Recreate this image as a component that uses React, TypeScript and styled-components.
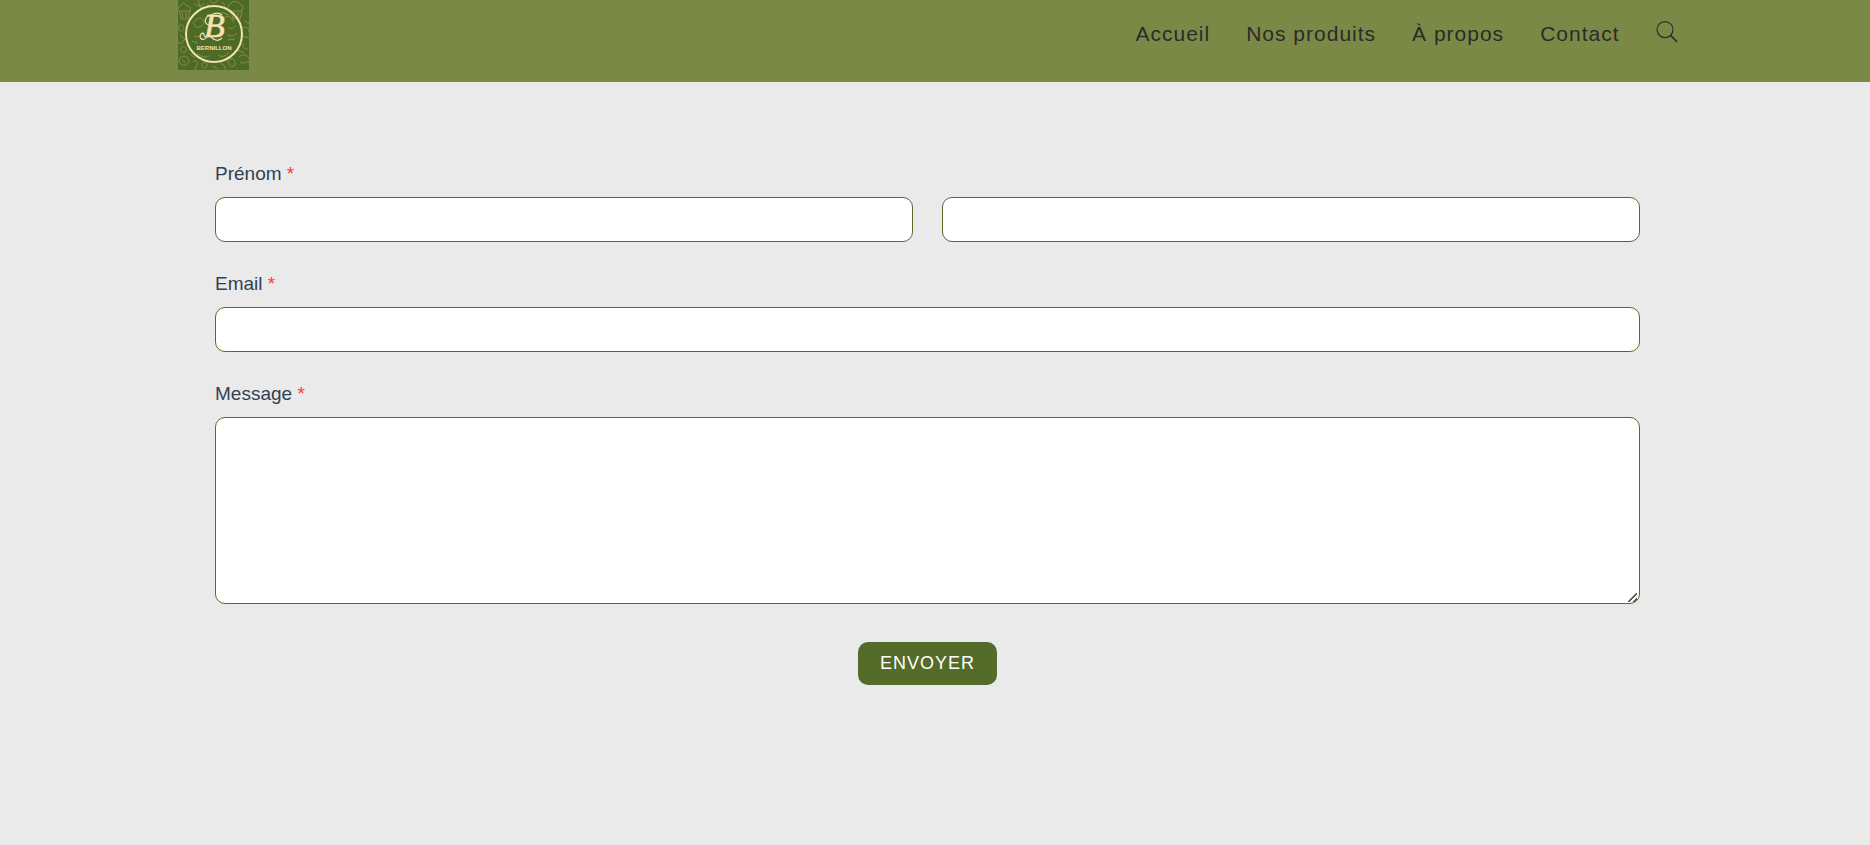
import React from "react";
import styled, { createGlobalStyle } from "styled-components";

const GlobalStyle = createGlobalStyle`
  *, *::before, *::after { box-sizing: border-box; }
  body {
    margin: 0;
    background: #eaeaea;
    font-family: "Liberation Sans", Arial, Helvetica, sans-serif;
  }
`;

const Header = styled.header`
  background: #7b8946;
  padding: 0 15px 12px 0;
`;

const HeaderInner = styled.div`
  display: flex;
  justify-content: space-between;
  align-items: flex-start;
  max-width: 1500px;
  margin: 0 auto;
`;

const LogoLink = styled.a`
  display: block;
  svg { display: block; }
`;

const Nav = styled.nav`
  display: flex;
  align-items: flex-start;
  gap: 36px;
  padding-top: 19px;
`;

const NavLink = styled.a`
  font-size: 21px;
  line-height: 30px;
  letter-spacing: 1px;
  color: #2b2b2b;
  text-decoration: none;
`;

const SearchButton = styled.button`
  border: 0;
  background: none;
  padding: 2px 0 0;
  color: #2b2b2b;
  cursor: pointer;
  svg { display: block; }
`;

const Main = styled.main`
  padding: 80px 15px 160px 0;
`;

const Form = styled.form`
  display: flex;
  flex-direction: column;
  max-width: 1425px;
  margin: 0 auto;
`;

const Field = styled.div`
  margin-bottom: 30px;
`;

const Label = styled.label`
  display: block;
  font-size: 19px;
  line-height: 24px;
  margin-bottom: 11px;
  color: #334055;
`;

const Required = styled.span`
  color: #ff3b30;
`;

const NameRow = styled.div`
  display: grid;
  grid-template-columns: 1fr 1fr;
  gap: 29px;
`;

const TextInput = styled.input`
  display: block;
  width: 100%;
  height: 45px;
  padding: 0 14px;
  border: 1px solid #556b2a;
  border-radius: 10px;
  background: #fff;
  font: inherit;
  font-size: 18px;
  outline: none;
`;

const MessageBox = styled.textarea`
  display: block;
  width: 100%;
  height: 187px;
  padding: 10px 14px;
  border: 1px solid #556b2a;
  border-radius: 10px;
  background: #fff;
  font: inherit;
  font-size: 18px;
  outline: none;
  resize: vertical;

  &::-webkit-resizer {
    background: linear-gradient(
        135deg,
        transparent 44%,
        #5a5a60 45%,
        #5a5a60 56%,
        transparent 57%,
        transparent 72%,
        #5a5a60 73%,
        #5a5a60 84%,
        transparent 85%
      )
      4px 5px / 9px 9px no-repeat;
  }
`;

const SubmitButton = styled.button`
  align-self: center;
  margin-top: 8px;
  height: 43px;
  padding: 0 22px;
  border: 0;
  border-radius: 10px;
  background: #556b2a;
  color: #fff;
  font: inherit;
  font-size: 18px;
  letter-spacing: 1px;
  text-transform: uppercase;
  cursor: pointer;
`;

const Logo = () => (
  <svg width="71" height="70" viewBox="0 0 71 70" role="img" aria-label="Bernillon">
    <rect width="71" height="70" fill="#4d6b27" />
    <g fill="none" stroke="#a39c4c" strokeWidth="0.9" opacity="0.8">
      {/* cupcake and pastry sketches */}
      <path d="M1 11l2 8h7l2-8zM0 10c0-5 4-4 5-7 3 1 3 3 5 3 3 1 3 4 1 5M4 12l1 6M8 12v6" />
      <path d="M52 4c3-4 8-3 10 0 3 1 4 5 1 7H52c-3-1-3-5 0-7zM53 11l2 8h7l2-8M56 12l1 6M60 12v6" />
      <path d="M16 3c3 4 8 4 10 0M20 0l3 9M32 0c1 4 6 4 8 0M44 2l3 4M29 4l3 2" />
      <path d="M1 26c4-3 6 1 4 4s-5 1-4-4zM2 35l5 4-4 5-3-2M4 47c4-2 6 3 3 5s-6-2-3-5z" />
      <path d="M2 58c3-3 8-2 9 2s-5 7-8 4-2-3-1-6zM4 60l4 3M15 62c3-3 5 0 4 3l-2 5M12 54l5 4" />
      <path d="M24 64c2-3 6-1 5 2s-5 3-5-2zM34 66l6 3M43 63c3 2 5 4 4 7M50 60c4-3 8 0 7 4s-7 3-7-4z" />
      <path d="M61 57c4-4 9-2 10 2M62 62c3 2 6 1 9-1M60 50l6 3M66 43c-3 3 0 7 4 6M65 28c4-2 6 1 6 4M67 21l4 3M65 36l6 2" />
      <path d="M17 21c3-5 9-3 9 1s-6 7-9 4-1-3 0-5zM16 36c4 2 9 0 10-4M46 18c4-4 8 0 10 5M50 27c3 3 5 1 8-2M49 35c4 2 7 1 10-2M43 12l8 3M19 53c4 4 8 5 12 3M40 55c4 3 8 1 11-3M14 41l6 2M50 40l7-1" />
    </g>
    <circle cx="36" cy="34" r="28" fill="none" stroke="#f2e3b3" strokeWidth="2" />
    <text x="26" y="37" fontFamily="'Liberation Serif', serif" fontStyle="italic" fontSize="34" fill="#f2e3b3" stroke="#f2e3b3" strokeWidth="0.6">B</text>
    <path d="M31 25c-6-1-5-10 5-11M35 14c3-1 7-1 9 1M29 37c-4 5-9 1-6-3 2-2 4 0 3 2M33 37c4 4 8 4 11 1" fill="none" stroke="#f2e3b3" strokeWidth="1.2" />
    <text x="36" y="50" textAnchor="middle" fontFamily="'Liberation Sans', sans-serif" fontWeight="700" fontSize="6" fill="#f2e3b3">BERNILLON</text>
  </svg>
);

const SearchIcon = () => (
  <svg width="22" height="22" viewBox="0 0 22 22" fill="none" stroke="currentColor" aria-hidden="true">
    <circle cx="9" cy="8.6" r="8" strokeWidth="1.1" />
    <path d="M14.6 14.4l6.6 6.6" strokeWidth="1.5" />
  </svg>
);

const links = ["Accueil", "Nos produits", "À propos", "Contact"];

export default function App() {
  return (
    <>
      <GlobalStyle />
      <Header>
        <HeaderInner>
          <LogoLink href="#"><Logo /></LogoLink>
          <Nav>
            {links.map((label) => (
              <NavLink key={label} href="#">{label}</NavLink>
            ))}
            <SearchButton type="button" aria-label="Rechercher"><SearchIcon /></SearchButton>
          </Nav>
        </HeaderInner>
      </Header>
      <Main>
        <Form onSubmit={(e) => e.preventDefault()}>
          <Field>
            <Label htmlFor="prenom">Prénom <Required>*</Required></Label>
            <NameRow>
              <TextInput id="prenom" type="text" />
              <TextInput type="text" aria-label="Nom" />
            </NameRow>
          </Field>
          <Field>
            <Label htmlFor="email">Email <Required>*</Required></Label>
            <TextInput id="email" type="email" />
          </Field>
          <Field>
            <Label htmlFor="message">Message <Required>*</Required></Label>
            <MessageBox id="message" />
          </Field>
          <SubmitButton type="submit">Envoyer</SubmitButton>
        </Form>
      </Main>
    </>
  );
}
